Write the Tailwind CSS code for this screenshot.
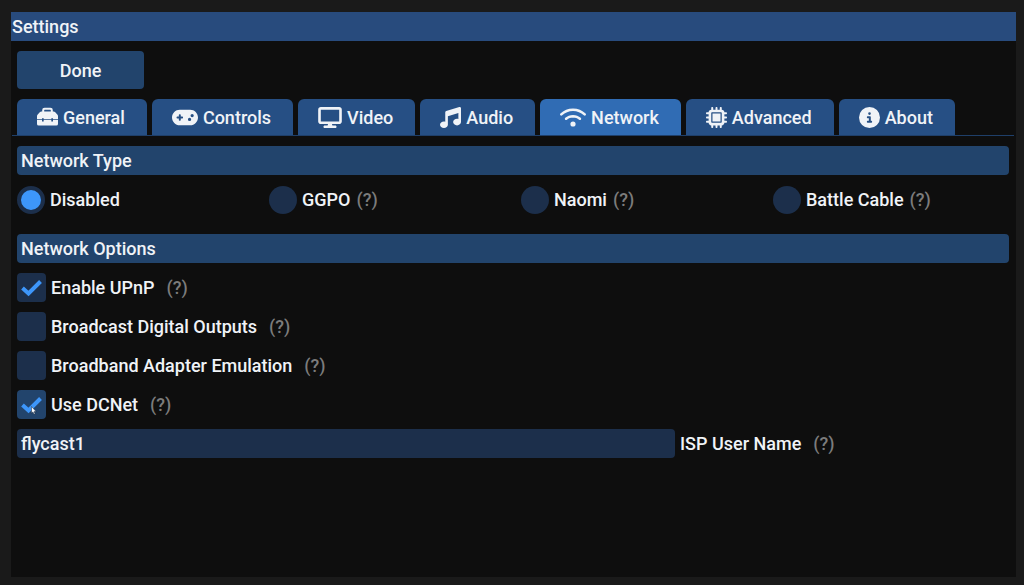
<!DOCTYPE html>
<html lang="en">
<head>
    <meta charset="UTF-8">
    <meta name="viewport" content="width=device-width, initial-scale=1.0">
    <title>Settings</title>
    <script src="https://cdn.jsdelivr.net/npm/@tailwindcss/browser@4"></script>
</head>
<body class="bg-[#1a1a1a] min-h-screen flex flex-col pt-3 pr-2 pb-2 pl-[11px] font-[Roboto,sans-serif] text-[18px] leading-[29px] font-medium text-[#f0f3f7]">
    <main class="flex-1 flex flex-col bg-[#0e0e0e]">
        <h1 class="bg-[#284b7d] pl-px">Settings</h1>

        <div class="flex flex-col pl-1.5 pr-[7px] pt-2.5">
            <button type="button" class="w-[127px] h-[38px] rounded-sm bg-[#22446c] hover:bg-[#306cb4]">Done</button>

            <!-- Tabs -->
            <div role="tablist" class="mt-2.5 -mx-[5px] px-[5px] flex gap-[5px] border-b border-[#1f3f69]">
                <button type="button" role="tab" class="h-9 pl-5 pr-[22px] flex items-center gap-[5px] rounded-t-md bg-[#264f84]">
                    <svg class="h-[21px] w-[21px]" fill="currentColor" viewBox="0 0 21 21"><path fill-rule="evenodd" d="M5.2 4.5V3.1A2.4 2.4 0 0 1 7.6.7h5.8a2.4 2.4 0 0 1 2.4 2.4v1.4h.8c.5 0 1 .2 1.400.6l2.300 2.300c.4.4.7 1 .7 1.600v3.200h-5V11.300h-1.700v.9H6.700v-.9H5v.9H0V9c0-.6.3-1.200.7-1.600L3 5.100c.4-.4.9-.6 1.400-.6zM7.200 4.500h6.600V3.200a.5.5 0 0 0-.5-.5H7.700a.5.5 0 0 0-.5.500zM0 13.100h5v1.300h1.700v-1.300h7.600v1.300H16v-1.300h5v3.800a1.700 1.700 0 0 1-1.700 1.700H1.700A1.700 1.700 0 0 1 0 16.900z"/></svg>
                    General
                </button>
                <button type="button" role="tab" class="h-9 pl-5 pr-[22px] flex items-center gap-[5px] rounded-t-md bg-[#264f84]">
                    <svg class="h-[21px] w-[26px]" fill="currentColor" viewBox="0 0 640 512"><path d="M192 64C86 64 0 150 0 256S86 448 192 448H448c106 0 192-86 192-192s-86-192-192-192H192zM496 168a40 40 0 1 1 0 80 40 40 0 1 1 0-80zM392 304a40 40 0 1 1 80 0 40 40 0 1 1 -80 0zM168 200c0-13.3 10.7-24 24-24s24 10.7 24 24v32h32c13.3 0 24 10.7 24 24s-10.7 24-24 24H216v32c0 13.3-10.7 24-24 24s-24-10.7-24-24V280H136c-13.3 0-24-10.7-24-24s10.7-24 24-24h32V200z"/></svg>
                    Controls
                </button>
                <button type="button" role="tab" class="h-9 pl-5 pr-[22px] flex items-center gap-[5px] rounded-t-md bg-[#264f84]">
                    <svg class="h-[21px] w-6" fill="currentColor" viewBox="0 0 576 512"><path d="M64 0C28.7 0 0 28.7 0 64V352c0 35.3 28.7 64 64 64H240l-10.7 32H160c-17.7 0-32 14.3-32 32s14.3 32 32 32H416c17.7 0 32-14.3 32-32s-14.3-32-32-32H346.7L336 416H512c35.3 0 64-28.7 64-64V64c0-35.3-28.7-64-64-64H64zM512 64V352H64V64H512z"/></svg>
                    Video
                </button>
                <button type="button" role="tab" class="h-9 pl-5 pr-[22px] flex items-center gap-[5px] rounded-t-md bg-[#264f84]">
                    <svg class="h-[21px] w-[21px]" fill="currentColor" viewBox="0 0 512 512"><path d="M499.1 6.3c8.1 6 12.9 15.6 12.9 25.7v72V368c0 44.2-43 80-96 80s-96-35.8-96-80s43-80 96-80c11.2 0 22 1.6 32 4.6V147L192 223.8V432c0 44.2-43 80-96 80s-96-35.8-96-80s43-80 96-80c11.2 0 22 1.6 32 4.6V200 128c0-14.1 9.3-26.6 22.8-30.7l320-96c9.7-2.9 20.2-1.1 28.3 5z"/></svg>
                    Audio
                </button>
                <button type="button" role="tab" aria-selected="true" class="h-9 pl-5 pr-[22px] flex items-center gap-[5px] rounded-t-md bg-[#306cb4]">
                    <svg class="h-[21px] w-[26px]" fill="currentColor" viewBox="0 0 640 512"><path d="M54.2 202.9C123.2 136.7 216.8 96 320 96s196.8 40.7 265.8 106.9c12.8 12.2 33 11.8 45.2-.9s11.8-33-.9-45.2C549.7 79.5 440.4 32 320 32S90.3 79.5 9.8 156.7C-2.9 169-3.3 189.2 8.9 202s32.5 13.2 45.2 .9zM320 256c56.8 0 108.6 21.1 148.2 56c13.3 11.7 33.5 10.4 45.2-2.8s10.4-33.5-2.8-45.2C459.8 219.2 393 192 320 192s-139.8 27.2-190.5 72c-13.3 11.7-14.5 31.9-2.8 45.2s31.9 14.5 45.2 2.8c39.5-34.9 91.3-56 148.2-56zm64 160a64 64 0 1 0 -128 0 64 64 0 1 0 128 0z"/></svg>
                    Network
                </button>
                <button type="button" role="tab" class="h-9 pl-5 pr-[22px] flex items-center gap-[5px] rounded-t-md bg-[#264f84]">
                    <svg class="h-[21px] w-[21px]" fill="currentColor" viewBox="0 0 512 512"><path fill-rule="evenodd" d="M176 24c0-13.3-10.7-24-24-24s-24 10.7-24 24V64c-35.3 0-64 28.7-64 64H24c-13.3 0-24 10.7-24 24s10.7 24 24 24H64v56H24c-13.3 0-24 10.7-24 24s10.7 24 24 24H64v56H24c-13.3 0-24 10.7-24 24s10.7 24 24 24H64c0 35.3 28.7 64 64 64v40c0 13.3 10.7 24 24 24s24-10.7 24-24V448h56v40c0 13.3 10.7 24 24 24s24-10.7 24-24V448h56v40c0 13.3 10.7 24 24 24s24-10.7 24-24V448c35.3 0 64-28.7 64-64h40c13.3 0 24-10.7 24-24s-10.7-24-24-24H448V280h40c13.3 0 24-10.7 24-24s-10.7-24-24-24H448V176h40c13.3 0 24-10.7 24-24s-10.7-24-24-24H448c0-35.3-28.7-64-64-64V24c0-13.3-10.7-24-24-24s-24 10.7-24 24V64H280V24c0-13.3-10.7-24-24-24s-24 10.7-24 24V64H176V24zM144 128H368c8.800 0 16 7.200 16 16V368c0 8.800-7.200 16-16 16H144c-8.800 0-16-7.200-16-16V144c0-8.800 7.200-16 16-16zM158 158v196h196V158z"/></svg>
                    Advanced
                </button>
                <button type="button" role="tab" class="h-9 pl-5 pr-[22px] flex items-center gap-[5px] rounded-t-md bg-[#264f84]">
                    <svg class="h-[21px] w-[21px]" fill="currentColor" viewBox="0 0 512 512"><path d="M256 512A256 256 0 1 0 256 0a256 256 0 1 0 0 512zM216 336h24V272H216c-13.3 0-24-10.7-24-24s10.7-24 24-24h48c13.3 0 24 10.7 24 24v88h8c13.3 0 24 10.7 24 24s-10.7 24-24 24H216c-13.3 0-24-10.7-24-24s10.7-24 24-24zm40-208a32 32 0 1 1 0 64 32 32 0 1 1 0-64z"/></svg>
                    About
                </button>
            </div>

            <!-- Network type -->
            <h2 class="mt-2.5 px-1 rounded-sm bg-[#22446c]">Network Type</h2>
            <div class="mt-2.5 grid grid-cols-4 gap-x-4">
                <div class="flex items-center gap-1.5">
                    <label class="flex items-center gap-[5px]"><input type="radio" name="networkType" checked class="appearance-none size-7 rounded-full bg-[#1c2f4b] checked:border-4 checked:border-[#1c2f4b] checked:bg-[#3d96fa]">Disabled</label>
                </div>
                <div class="flex items-center gap-1.5">
                    <label class="flex items-center gap-[5px]"><input type="radio" name="networkType" class="appearance-none size-7 rounded-full bg-[#1c2f4b] checked:border-4 checked:border-[#1c2f4b] checked:bg-[#3d96fa]">GGPO</label>
                    <span class="text-[#7c7c7c]">(?)</span>
                </div>
                <div class="flex items-center gap-1.5">
                    <label class="flex items-center gap-[5px]"><input type="radio" name="networkType" class="appearance-none size-7 rounded-full bg-[#1c2f4b] checked:border-4 checked:border-[#1c2f4b] checked:bg-[#3d96fa]">Naomi</label>
                    <span class="text-[#7c7c7c]">(?)</span>
                </div>
                <div class="flex items-center gap-1.5">
                    <label class="flex items-center gap-[5px]"><input type="radio" name="networkType" class="appearance-none size-7 rounded-full bg-[#1c2f4b] checked:border-4 checked:border-[#1c2f4b] checked:bg-[#3d96fa]">Battle Cable</label>
                    <span class="text-[#7c7c7c]">(?)</span>
                </div>
            </div>

            <!-- Network options -->
            <h2 class="mt-5 px-1 rounded-sm bg-[#22446c]">Network Options</h2>
            <div class="mt-2.5 flex flex-col gap-2.5">
                <div class="flex items-center gap-3">
                    <label class="flex items-center gap-[5px]">
                        <span class="grid">
                            <input type="checkbox" checked class="peer col-start-1 row-start-1 appearance-none size-[29px] rounded-sm bg-[#1c2f4b]">
                            <svg class="col-start-1 row-start-1 size-[29px] pointer-events-none invisible peer-checked:visible" viewBox="0 0 29 29" fill="none" stroke="#3d96fa" stroke-width="4"><path d="M5.5 15l6 5.500L23.500 8.500"/></svg>
                        </span>
                        Enable UPnP
                    </label>
                    <span class="text-[#7c7c7c]">(?)</span>
                </div>
                <div class="flex items-center gap-3">
                    <label class="flex items-center gap-[5px]">
                        <span class="grid">
                            <input type="checkbox" class="peer col-start-1 row-start-1 appearance-none size-[29px] rounded-sm bg-[#1c2f4b]">
                            <svg class="col-start-1 row-start-1 size-[29px] pointer-events-none invisible peer-checked:visible" viewBox="0 0 29 29" fill="none" stroke="#3d96fa" stroke-width="4"><path d="M5.5 15l6 5.500L23.500 8.500"/></svg>
                        </span>
                        Broadcast Digital Outputs
                    </label>
                    <span class="text-[#7c7c7c]">(?)</span>
                </div>
                <div class="flex items-center gap-3">
                    <label class="flex items-center gap-[5px]">
                        <span class="grid">
                            <input type="checkbox" class="peer col-start-1 row-start-1 appearance-none size-[29px] rounded-sm bg-[#1c2f4b]">
                            <svg class="col-start-1 row-start-1 size-[29px] pointer-events-none invisible peer-checked:visible" viewBox="0 0 29 29" fill="none" stroke="#3d96fa" stroke-width="4"><path d="M5.5 15l6 5.500L23.500 8.500"/></svg>
                        </span>
                        Broadband Adapter Emulation
                    </label>
                    <span class="text-[#7c7c7c]">(?)</span>
                </div>
                <div class="flex items-center gap-3">
                    <label class="flex items-center gap-[5px]">
                        <span class="relative grid">
                            <input type="checkbox" checked class="peer col-start-1 row-start-1 appearance-none size-[29px] rounded-sm bg-[#22446c]">
                            <svg class="col-start-1 row-start-1 size-[29px] pointer-events-none invisible peer-checked:visible" viewBox="0 0 29 29" fill="none" stroke="#3d96fa" stroke-width="4"><path d="M5.5 15l6 5.500L23.500 8.500"/></svg>
                            <!-- mouse pointer -->
                            <svg class="absolute left-3.5 top-4 w-[6px] h-[9px] pointer-events-none" viewBox="0 0 6 9"><path fill="#fff" stroke="#1b2c44" stroke-width=".5" d="M.5.5v6.6l1.5-1.2 1 2.4 1.1-.5-1-2.2h2z"/></svg>
                        </span>
                        Use DCNet
                    </label>
                    <span class="text-[#7c7c7c]">(?)</span>
                </div>
                <div class="flex items-center gap-[5px]">
                    <input type="text" id="ispUserName" value="flycast1" class="flex-1 h-[29px] px-1 rounded-sm bg-[#1c2f4b] outline-none">
                    <div class="w-[329px] flex items-center gap-3">
                        <label for="ispUserName">ISP User Name</label>
                        <span class="text-[#7c7c7c]">(?)</span>
                    </div>
                </div>
            </div>
        </div>
    </main>
</body>
</html>
